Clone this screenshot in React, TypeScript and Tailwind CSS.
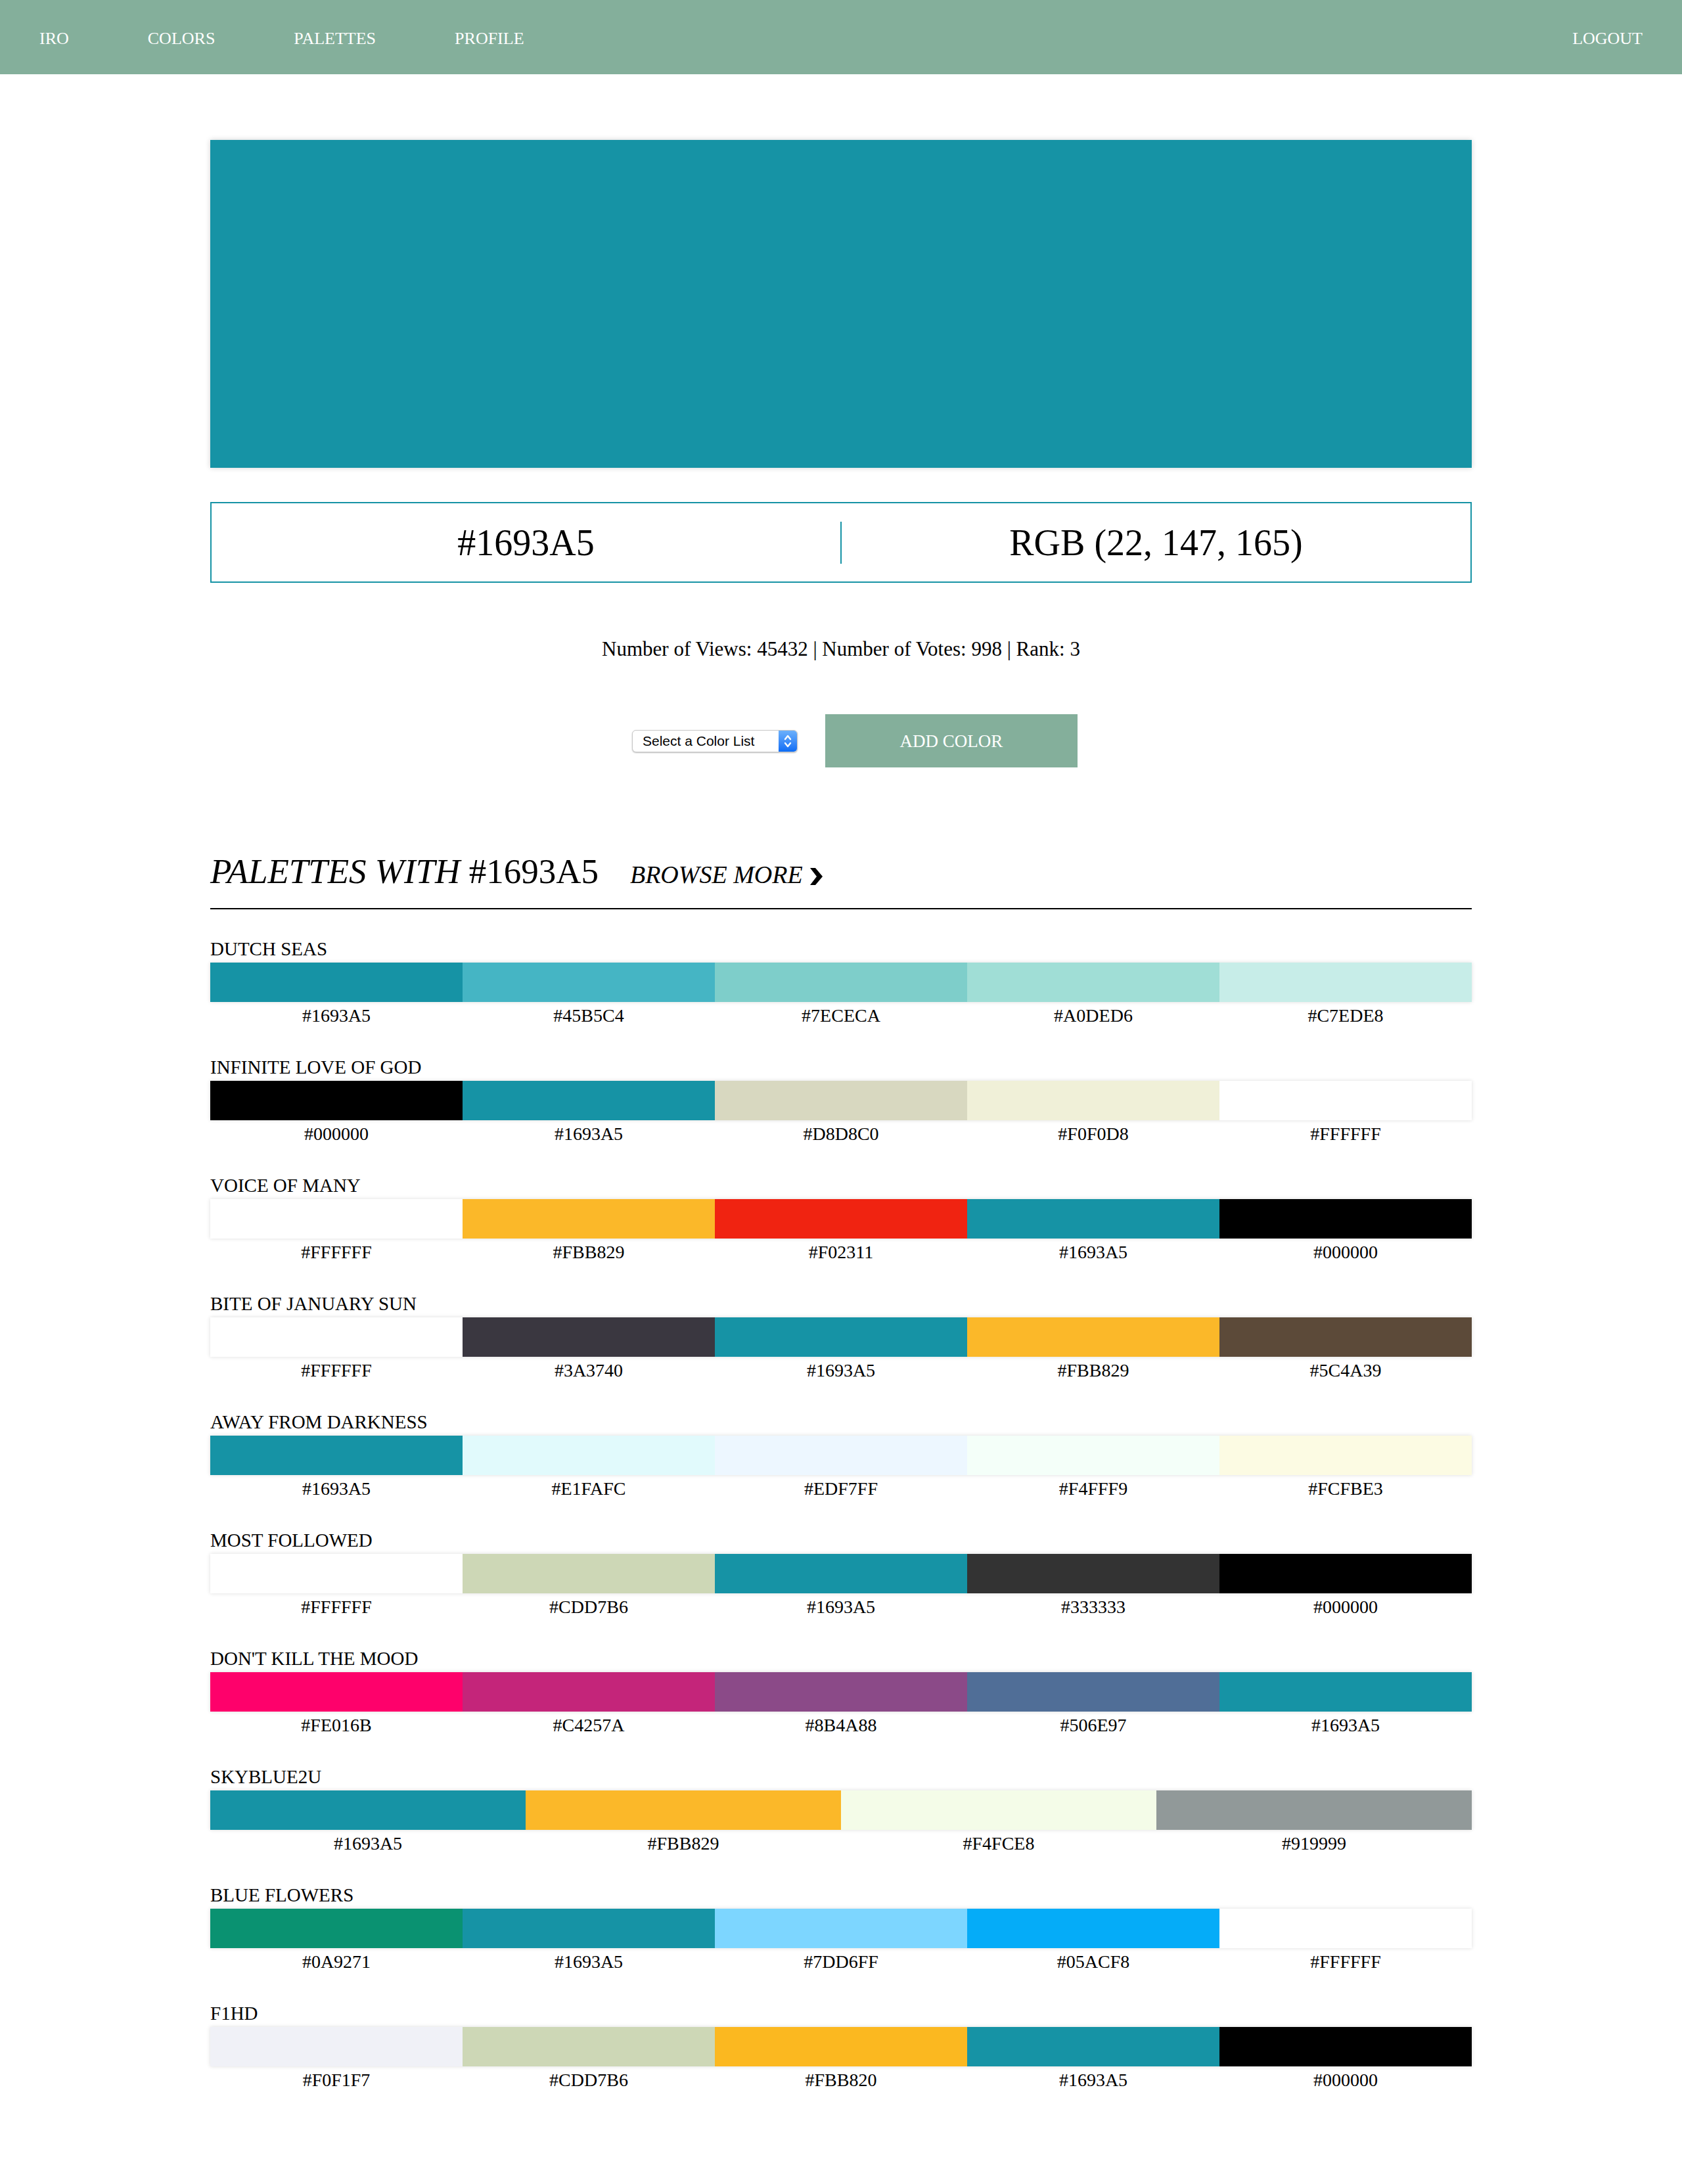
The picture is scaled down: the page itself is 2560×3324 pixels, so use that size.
import React from 'react';

type Palette = { name: string; colors: string[] };

const palettes: Palette[] = [
    { name: 'DUTCH SEAS', colors: ['#1693A5', '#45B5C4', '#7ECECA', '#A0DED6', '#C7EDE8'] },
    { name: 'INFINITE LOVE OF GOD', colors: ['#000000', '#1693A5', '#D8D8C0', '#F0F0D8', '#FFFFFF'] },
    { name: 'VOICE OF MANY', colors: ['#FFFFFF', '#FBB829', '#F02311', '#1693A5', '#000000'] },
    { name: 'BITE OF JANUARY SUN', colors: ['#FFFFFF', '#3A3740', '#1693A5', '#FBB829', '#5C4A39'] },
    { name: 'AWAY FROM DARKNESS', colors: ['#1693A5', '#E1FAFC', '#EDF7FF', '#F4FFF9', '#FCFBE3'] },
    { name: 'MOST FOLLOWED', colors: ['#FFFFFF', '#CDD7B6', '#1693A5', '#333333', '#000000'] },
    { name: "DON'T KILL THE MOOD", colors: ['#FE016B', '#C4257A', '#8B4A88', '#506E97', '#1693A5'] },
    { name: 'SKYBLUE2U', colors: ['#1693A5', '#FBB829', '#F4FCE8', '#919999'] },
    { name: 'BLUE FLOWERS', colors: ['#0A9271', '#1693A5', '#7DD6FF', '#05ACF8', '#FFFFFF'] },
    { name: 'F1HD', colors: ['#F0F1F7', '#CDD7B6', '#FBB820', '#1693A5', '#000000'] },
];

function NavBar() {
    return (
        <nav className="h-[113px] bg-[#84AF9B] text-white text-[26px] flex items-center justify-between px-[60px] pt-[3px]">
            <div className="flex items-center gap-[120px]">
                <span>IRO</span>
                <span>COLORS</span>
                <span>PALETTES</span>
                <span>PROFILE</span>
            </div>
            <span>LOGOUT</span>
        </nav>
    );
}

function ColorSelect() {
    return (
        <div className="flex items-stretch w-[252px] h-[34px] rounded-[6px] bg-white border border-[#c8c8c8] shadow-[0_1px_2px_rgba(0,0,0,0.25)] overflow-hidden font-['Liberation_Sans',sans-serif]">
            <div className="flex-1 flex items-center pl-[15px] text-[21px] text-black">Select a Color List</div>
            <div className="w-[28px] bg-gradient-to-b from-[#6bb0fb] to-[#0a6cf5] flex items-center justify-center">
                <svg width="14" height="24" viewBox="0 0 14 24" fill="none" stroke="white" strokeWidth="2.4" strokeLinecap="round" strokeLinejoin="round">
                    <polyline points="3,9 7,4 11,9" />
                    <polyline points="3,15 7,20 11,15" />
                </svg>
            </div>
        </div>
    );
}

function PaletteRow({ palette }: { palette: Palette }) {
    return (
        <div>
            <div className="text-[29px] leading-[35px]">{palette.name}</div>
            <div className="mt-[3px] h-[60px] flex shadow-[0_0_6px_rgba(0,0,0,0.14)]">
                {palette.colors.map((c, i) => (
                    <div key={i} className="flex-1" style={{ backgroundColor: c }} />
                ))}
            </div>
            <div className="mt-[3px] flex text-[28px] leading-[35px]">
                {palette.colors.map((c, i) => (
                    <div key={i} className="flex-1 text-center">{c}</div>
                ))}
            </div>
        </div>
    );
}

export default function App() {
    return (
        <div className="min-h-screen bg-white text-black font-['Liberation_Serif',serif]">
            <NavBar />
            <main className="w-[1920px] mx-auto pb-[150px]">
                <div className="mt-[100px] h-[499px] bg-[#1693A5] shadow-[0_0_8px_rgba(0,0,0,0.18)]" />

                <div className="mt-[52px] h-[123px] border-2 border-[#1693A5] flex items-center text-[56px]">
                    <div className="flex-1 text-center">#1693A5</div>
                    <div className="w-[2px] h-[64px] bg-[#1693A5]" />
                    <div className="flex-1 text-center">RGB (22, 147, 165)</div>
                </div>

                <div className="mt-[81px] text-center text-[31px] leading-[40px]">
                    Number of Views: 45432 | Number of Votes: 998 | Rank: 3
                </div>

                <div className="mt-[79px] flex items-center justify-center pl-[42px] gap-[42px]">
                    <ColorSelect />
                    <button className="w-[384px] h-[81px] bg-[#84AF9B] text-white text-[27px] pt-[2px]">ADD COLOR</button>
                </div>

                <div className="mt-[128px] pb-[21px] border-b-2 border-black flex items-baseline leading-[60px]">
                    <h2 className="text-[53px] font-normal">
                        <span className="italic">PALETTES WITH</span> #1693A5
                    </h2>
                    <a className="ml-[48px] text-[38px] italic flex items-baseline gap-[10px]">
                        BROWSE MORE
                        <svg width="20" height="26" viewBox="0 0 20 26" className="self-center translate-y-[3px]">
                            <polygon points="1,0 9,0 20,13 9,26 1,26 11,13" fill="black" />
                        </svg>
                    </a>
                </div>

                <div className="mt-[43px] flex flex-col gap-[44px]">
                    {palettes.map((p) => (
                        <PaletteRow key={p.name} palette={p} />
                    ))}
                </div>
            </main>
        </div>
    );
}
